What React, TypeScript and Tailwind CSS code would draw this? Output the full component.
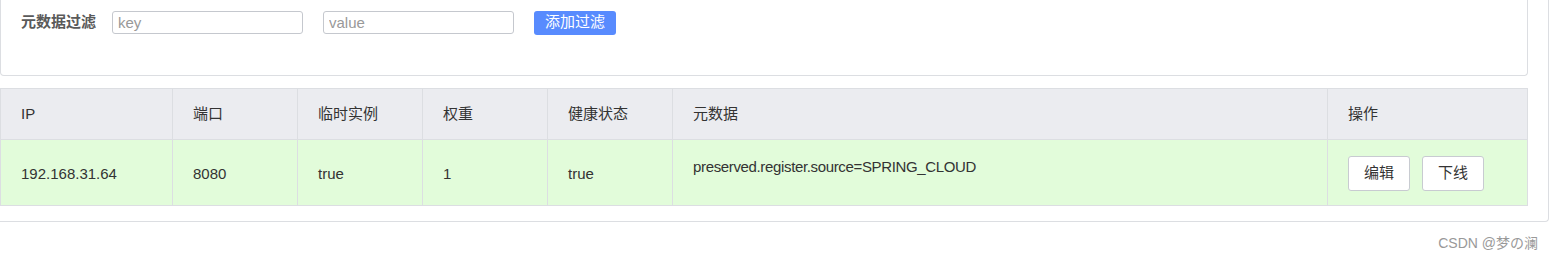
import React from 'react';

const font = '"Liberation Sans", "Noto Sans CJK SC", sans-serif';

const columns = [
  { title: 'IP', width: 'w-[172px]' },
  { title: '端口', width: 'w-[125px]' },
  { title: '临时实例', width: 'w-[125px]' },
  { title: '权重', width: 'w-[125px]' },
  { title: '健康状态', width: 'w-[125px]' },
  { title: '元数据', width: 'w-[655px]' },
  { title: '操作', width: 'flex-1' },
];

const row = ['192.168.31.64', '8080', 'true', '1', 'true'];

function Cell({ width, last, children }: { width: string; last?: boolean; children: React.ReactNode }) {
  return (
    <div className={`${width} shrink-0 flex items-center pl-[20px] ${last ? '' : 'border-r border-[#dcdee2]'}`}>
      {children}
    </div>
  );
}

export default function App() {
  return (
    <div className="w-[1553px] h-[257px] bg-white text-[15px] text-[#333]" style={{ fontFamily: font }}>
      <div className="w-[1549px] pr-[20px] pb-[15px] border-r border-b border-[#dcdee2] rounded-br-[4px]">
        {/* filter panel */}
        <div className="h-[76px] border-x border-b border-[#dcdee2] rounded-b-[4px] pt-[11px] pl-[20px]">
          <div className="flex items-center h-[23px]">
            <span className="font-bold text-[#5a5a5a] w-[91px]">元数据过滤</span>
            <input
              placeholder="key"
              className="w-[191px] h-[23px] border border-[#c5c8ce] rounded-[3px] px-[5px] placeholder:text-[#999] outline-none"
            />
            <input
              placeholder="value"
              className="ml-[20px] w-[191px] h-[23px] border border-[#c5c8ce] rounded-[3px] px-[5px] placeholder:text-[#999] outline-none"
            />
            <button className="ml-[20px] w-[82px] h-[24px] bg-[#588bfe] text-white rounded-[3px]">添加过滤</button>
          </div>
        </div>

        {/* table */}
        <div className="mt-[12px] border border-[#dcdee2]">
          <div className="flex h-[51px] bg-[#ebecf0] border-b border-[#dcdee2]">
            {columns.map((c, i) => (
              <Cell key={c.title} width={c.width} last={i === columns.length - 1}>
                {c.title}
              </Cell>
            ))}
          </div>
          <div className="flex h-[65px] bg-[#e2fcda]">
            {row.map((v, i) => (
              <Cell key={i} width={columns[i].width}>
                <span className="mt-[3px]">{v}</span>
              </Cell>
            ))}
            <Cell width={columns[5].width}>
              <span className="-mt-[10px] tracking-[-0.35px]">preserved.register.source=SPRING_CLOUD</span>
            </Cell>
            <Cell width={columns[6].width} last>
              <div className="flex gap-[12px] mt-[1px]">
                <button className="w-[62px] h-[35px] bg-white border border-[#c8cbd1] rounded-[3px]">编辑</button>
                <button className="w-[62px] h-[35px] bg-white border border-[#c8cbd1] rounded-[3px]">下线</button>
              </div>
            </Cell>
          </div>
        </div>
      </div>
      <div className="flex justify-end pr-[15px] mt-[11px] text-[14px] text-[#999]">CSDN @梦の澜</div>
    </div>
  );
}
